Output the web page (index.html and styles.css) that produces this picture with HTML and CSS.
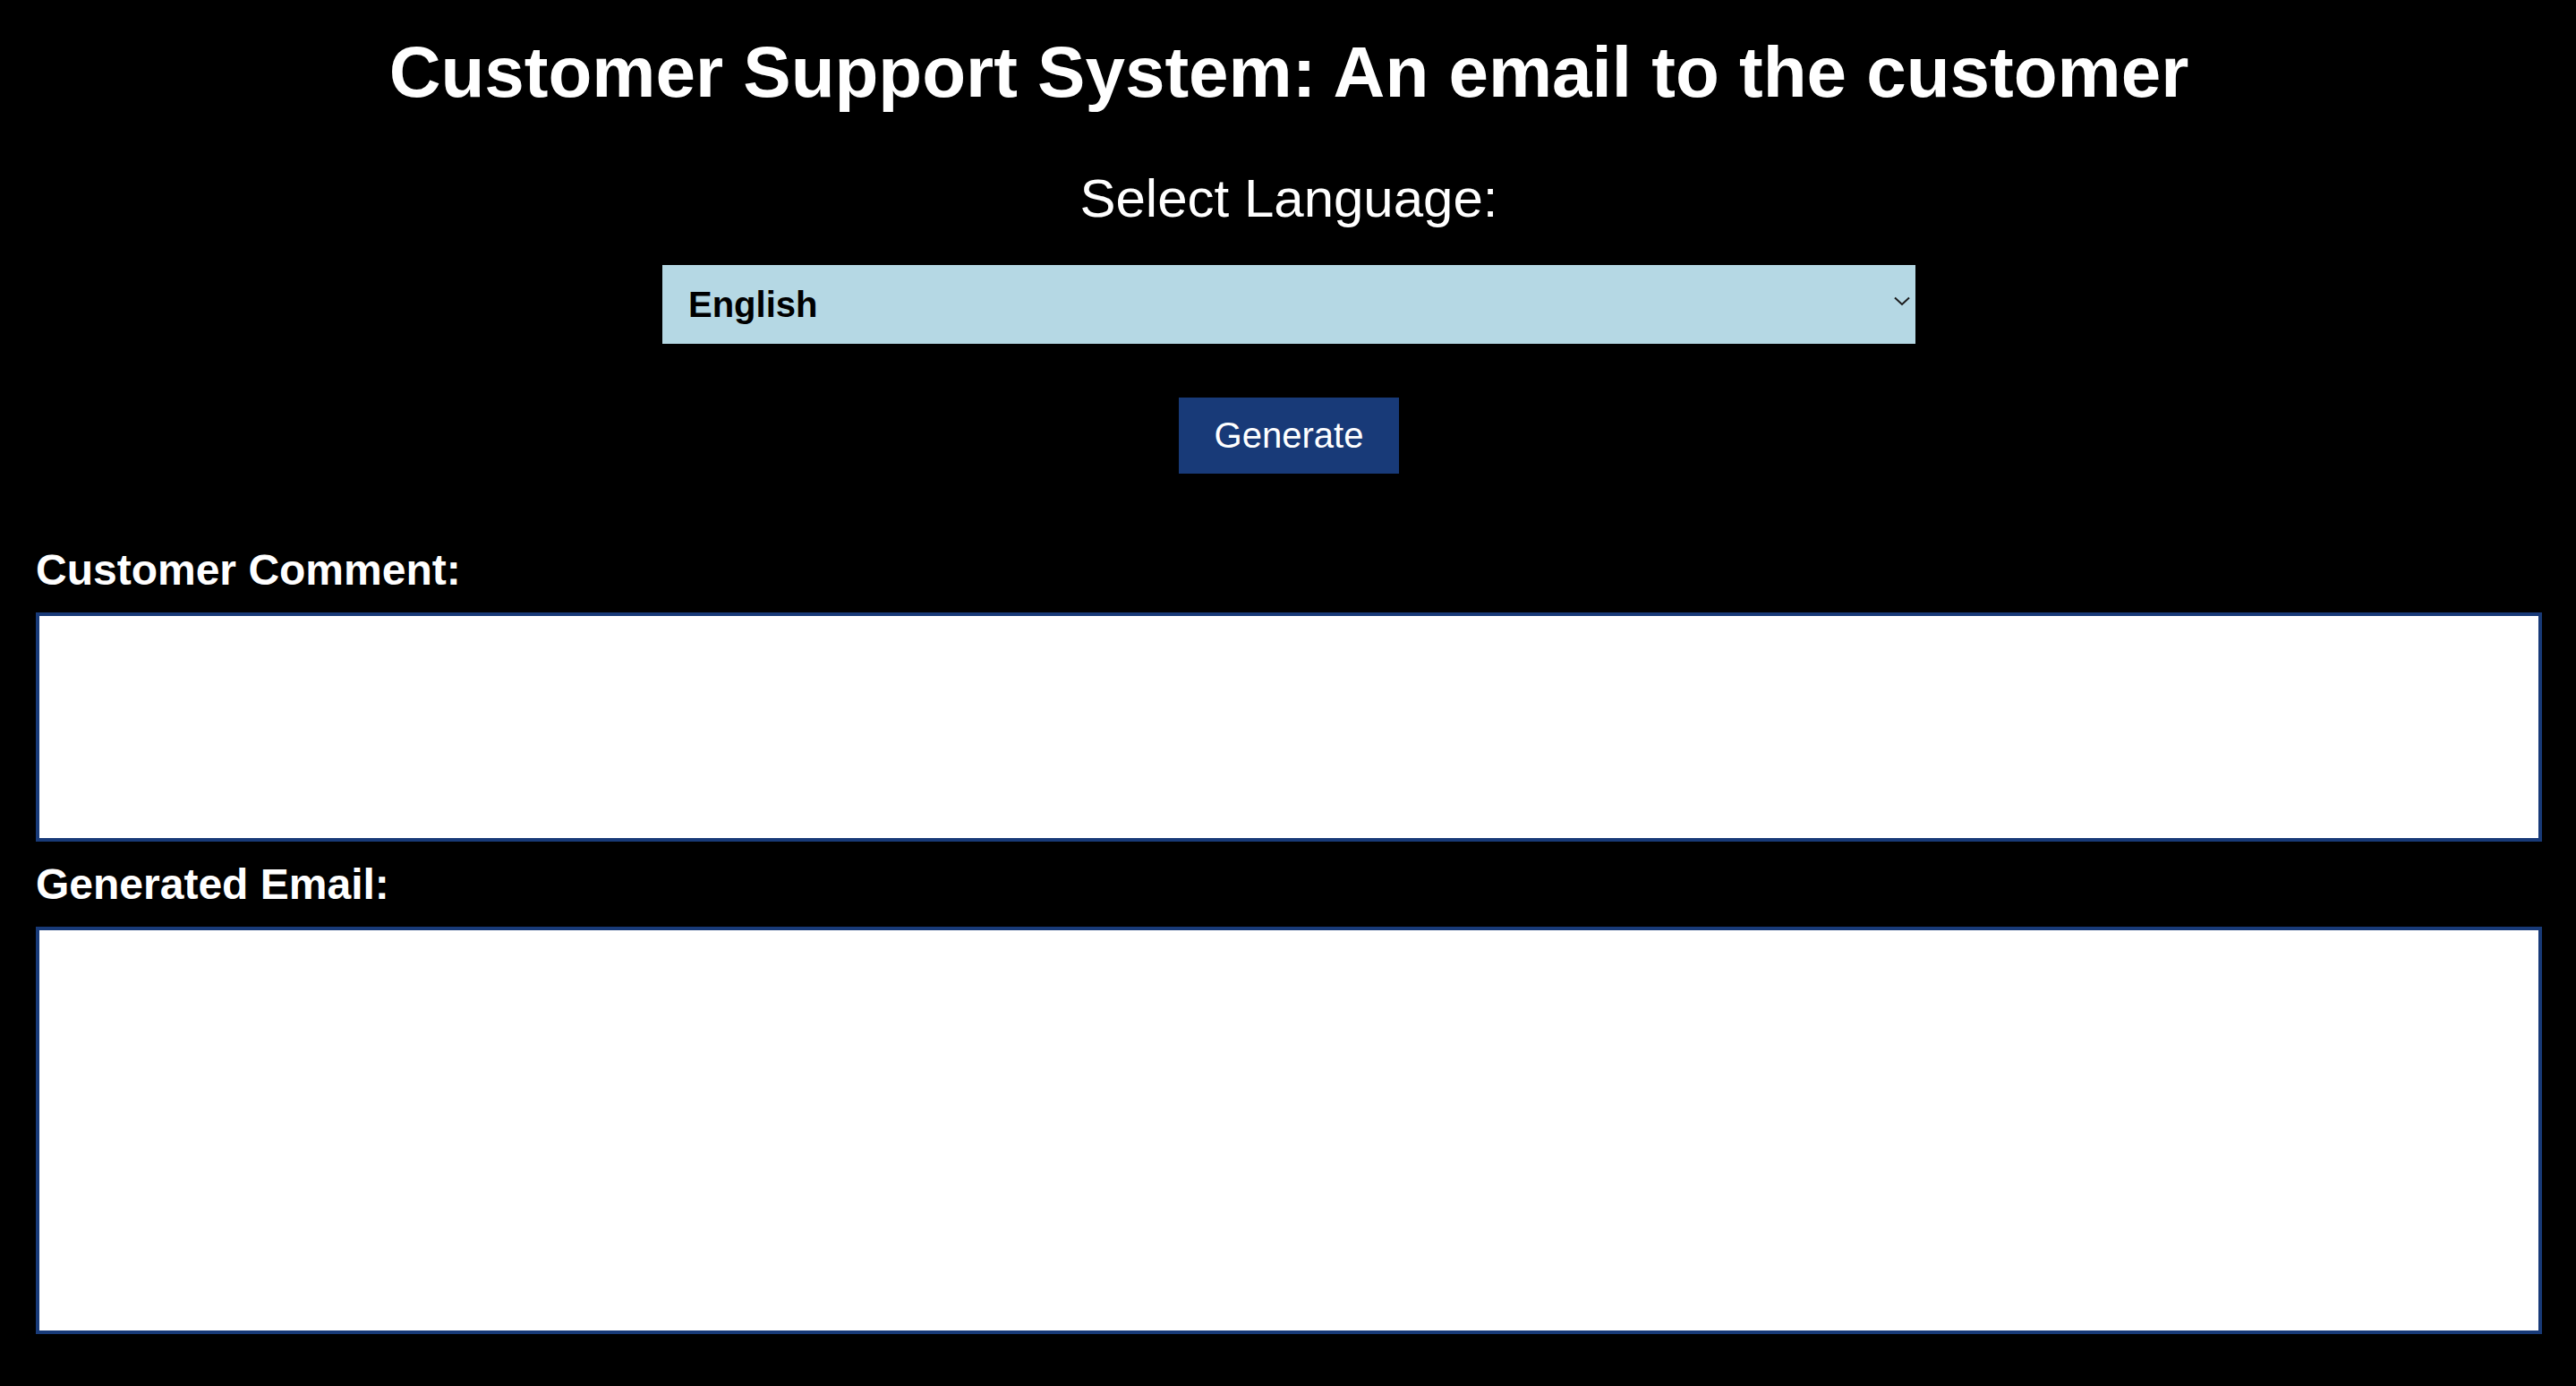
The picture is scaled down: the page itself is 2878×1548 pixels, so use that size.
FILE: index.html
```html
<!DOCTYPE html>
<html lang="en">
<head>
<meta charset="utf-8">
<title>Customer Support System</title>
<link rel="stylesheet" href="styles.css">
</head>
<body>
<main class="page">
  <h1 class="title">Customer Support System: An email to the customer</h1>
  <section class="controls">
    <label class="lang-label" for="lang">Select Language:</label>
    <div class="select-wrap">
      <select id="lang" class="lang-select">
        <option>English</option>
        <option>Spanish</option>
        <option>French</option>
      </select>
      <svg class="chevron" width="18" height="11" viewBox="0 0 18 11" aria-hidden="true">
        <path d="M1 1.5 L9 9 L17 1.5" fill="none" stroke="#1c1c1c" stroke-width="2"/>
      </svg>
    </div>
    <button class="generate" type="button">Generate</button>
  </section>
  <section class="fields">
    <label class="field-label" for="comment">Customer Comment:</label>
    <textarea id="comment" class="box box-comment"></textarea>
    <label class="field-label" for="email">Generated Email:</label>
    <textarea id="email" class="box box-email"></textarea>
  </section>
</main>
</body>
</html>
```
FILE: styles.css
```css
html, body {
  margin: 0;
  padding: 0;
  background: #000;
}
body {
  font-family: "Liberation Sans", Arial, sans-serif;
  color: #fff;
}
.page {
  padding: 35px 38px 0 40px;
  display: flex;
  flex-direction: column;
}
.title {
  margin: 0;
  font-size: 80px;
  line-height: 92px;
  font-weight: 700;
  text-align: center;
}
.controls {
  display: flex;
  flex-direction: column;
  align-items: center;
}
.lang-label {
  margin-top: 60px;
  font-size: 60px;
  line-height: 69px;
  font-weight: 400;
}
.select-wrap {
  position: relative;
  margin-top: 40px;
  width: 1400px;
  height: 88px;
}
.lang-select {
  appearance: none;
  -webkit-appearance: none;
  width: 100%;
  height: 100%;
  margin: 0;
  border: 0;
  border-radius: 0;
  background: #b5d8e4;
  color: #000;
  font-family: "Liberation Sans", Arial, sans-serif;
  font-size: 40px;
  font-weight: 700;
  padding: 0 60px 0 29px;
  outline: none;
}
.chevron {
  position: absolute;
  right: 6px;
  top: 35px;
  pointer-events: none;
}
.generate {
  margin-top: 60px;
  height: 85px;
  padding: 0 40px;
  border: 0;
  border-radius: 0;
  background: #183a78;
  color: #fff;
  font-family: "Liberation Sans", Arial, sans-serif;
  font-size: 40px;
  font-weight: 400;
}
.fields {
  display: flex;
  flex-direction: column;
  margin-top: 80px;
}
.field-label {
  font-size: 48px;
  line-height: 55px;
  font-weight: 700;
  margin-bottom: 20px;
}
.box {
  display: block;
  box-sizing: border-box;
  width: 100%;
  margin: 0 0 20px 0;
  border: 4px solid #183a78;
  border-radius: 0;
  background: #fff;
  resize: none;
  padding: 8px;
  font-family: "Liberation Sans", Arial, sans-serif;
  font-size: 32px;
  outline: none;
}
.box-comment {
  height: 256px;
}
.box-email {
  height: 455px;
}
```
